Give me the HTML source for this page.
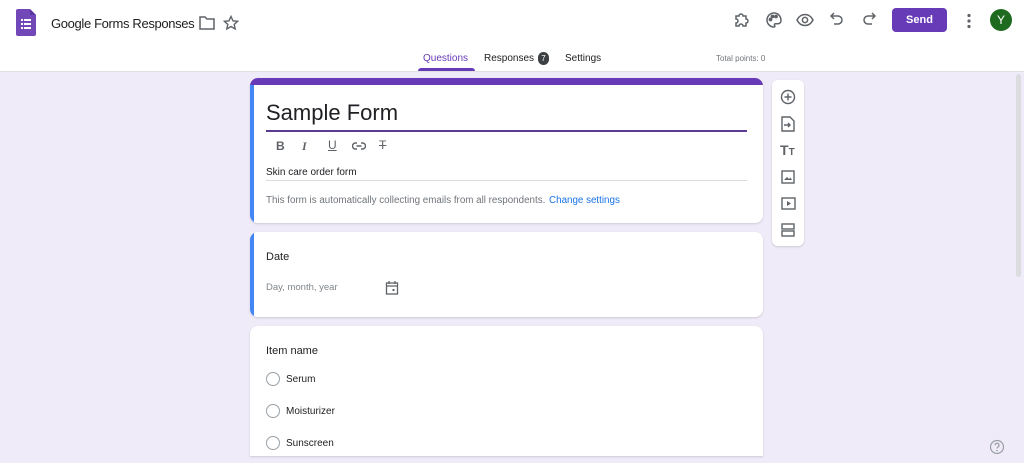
<!DOCTYPE html>
<html><head><style>
*{box-sizing:border-box;margin:0;padding:0}
body{width:1024px;height:463px;overflow:hidden;background:#f0ebf8;font-family:"Liberation Sans",Arial,sans-serif;color:#202124;position:relative}
.hdr{position:absolute;left:0;top:0;width:1024px;height:72px;background:#fff;border-bottom:1px solid #e0e0e0}
.abs{position:absolute}
.card{position:absolute;left:250px;width:513px;background:#fff;border-radius:8px;box-shadow:0 1px 2px rgba(0,0,0,.15)}
.ic{position:absolute;stroke:#5f6368;fill:none;stroke-width:1.8}
.t{position:absolute;white-space:nowrap}
.radio{position:absolute;left:16px;width:14px;height:14px;border:1.2px solid #9aa0a6;border-radius:50%}
</style></head><body>
<div class="hdr">
 <svg class="abs" style="left:16px;top:9px" width="20" height="27" viewBox="0 0 20 27"><path d="M0 2a2 2 0 0 1 2-2h12l6 6v19a2 2 0 0 1-2 2H2a2 2 0 0 1-2-2z" fill="#7248b9"/><path d="M14 0v6h6z" fill="#5b36a0"/><g fill="#fff"><rect x="5" y="10" width="2" height="2"/><rect x="8" y="10" width="7" height="2"/><rect x="5" y="14" width="2" height="2"/><rect x="8" y="14" width="7" height="2"/><rect x="5" y="18" width="2" height="2"/><rect x="8" y="18" width="7" height="2"/></g></svg>
 <div class="t" style="left:51px;top:16px;font-size:13px;color:#202124;letter-spacing:-0.35px">Google Forms Responses</div>
 <svg class="ic" style="left:199px;top:16px" width="16" height="14" viewBox="0 0 16 14"><path d="M1 1h5l2 2h7v10H1z" stroke-width="1.5"/></svg>
 <svg class="ic" style="left:223px;top:15px" width="16" height="16" viewBox="0 0 16 16"><path d="M8 1.5l2 4.3 4.6.5-3.4 3.1 1 4.5L8 11.6l-4.2 2.3 1-4.5L1.4 6.3 6 5.8z" stroke-width="1.4"/></svg>
 <svg class="ic" style="left:733px;top:11px" width="18" height="18" viewBox="0 0 18 18"><path d="M3 5h3a2 2 0 1 1 4 0h3v3a2 2 0 1 1 0 4v3h-3a2 2 0 1 0-4 0H3v-3a2 2 0 1 0 0-4z" stroke-width="1.5"/></svg>
 <svg class="ic" style="left:765px;top:11px" width="18" height="18" viewBox="0 0 18 18"><path d="M9 2a7 7 0 0 0 0 14c1 0 1.2-1 .6-1.6-.6-.7-.2-1.7.8-1.7H13a3 3 0 0 0 3-3C16 5 13 2 9 2z" stroke-width="1.5"/><circle cx="5.5" cy="8.5" r="1" fill="#5f6368"/><circle cx="7.5" cy="5.5" r="1" fill="#5f6368"/><circle cx="11" cy="5.5" r="1" fill="#5f6368"/></svg>
 <svg class="ic" style="left:796px;top:12px" width="18" height="16" viewBox="0 0 18 16"><path d="M1 8c2-4 5-5.5 8-5.5s6 1.5 8 5.5c-2 4-5 5.5-8 5.5S3 12 1 8z" stroke-width="1.5"/><circle cx="9" cy="8" r="2.6" stroke-width="1.5"/></svg>
 <svg class="ic" style="left:830px;top:12px" width="14" height="14" viewBox="0 0 14 14"><path d="M4 1L1 4l3 3M1 4h7a4 4 0 0 1 0 8H4" stroke-width="1.5"/></svg>
 <svg class="ic" style="left:862px;top:12px" width="14" height="14" viewBox="0 0 14 14"><path d="M10 1l3 3-3 3M13 4H6a4 4 0 0 0 0 8h4" stroke-width="1.5"/></svg>
 <div class="abs" style="left:892px;top:8px;width:55px;height:24px;background:#673ab7;border-radius:4px;color:#fff;font-size:11px;font-weight:bold;text-align:center;line-height:25px">Send</div>
 <svg class="abs" style="left:966px;top:13px" width="6" height="16"><circle cx="3" cy="2.5" r="1.6" fill="#5f6368"/><circle cx="3" cy="8" r="1.6" fill="#5f6368"/><circle cx="3" cy="13.5" r="1.6" fill="#5f6368"/></svg>
 <div class="abs" style="left:990px;top:9px;width:22px;height:22px;border-radius:50%;background:#1e6a1e;color:#fff;font-size:12px;text-align:center;line-height:22px">Y</div>
 <div class="t" style="left:423px;top:53px;font-size:10px;color:#673ab7">Questions</div>
 <div class="abs" style="left:418px;top:68px;width:57px;height:3px;background:#673ab7;border-radius:3px 3px 0 0"></div>
 <div class="t" style="left:484px;top:53px;font-size:10px;color:#202124">Responses</div>
 <div class="abs" style="left:538px;top:52px;width:11px;height:13px;border-radius:6px;background:#3c4043;color:#fff;font-size:8px;text-align:center;line-height:13px">7</div>
 <div class="t" style="left:565px;top:53px;font-size:10px;color:#202124">Settings</div>
 <div class="t" style="left:716px;top:54px;font-size:8px;color:#70757a">Total points: 0</div>
</div>

<div class="card" style="top:78px;height:145px;overflow:hidden">
 <div class="abs" style="left:0;top:0;width:513px;height:7px;background:#673ab7"></div>
 <div class="abs" style="left:0;top:7px;width:4px;height:138px;background:#4285f4"></div>
 <div class="t" style="left:16px;top:22px;font-size:22px">Sample Form</div>
 <div class="abs" style="left:16px;top:52px;width:481px;height:2px;background:#5e3b92"></div>
 <div class="t" style="left:26px;top:61px;font-size:12px;font-weight:bold;color:#5f6368">B</div>
 <div class="t" style="left:52px;top:61px;font-size:12px;font-style:italic;font-weight:bold;color:#5f6368;font-family:'Liberation Serif',serif">I</div>
 <div class="t" style="left:78px;top:60px;font-size:12px;text-decoration:underline;color:#5f6368">U</div>
 <svg class="ic" style="left:102px;top:64px" width="14" height="8" viewBox="0 0 14 8"><path d="M5 1H3.5a3 3 0 0 0 0 6H5M9 1h1.5a3 3 0 0 1 0 6H9M4.5 4h5" stroke-width="1.4"/></svg>
 <div class="t" style="left:129px;top:60px;font-size:12px;color:#5f6368;text-decoration:line-through">T</div>
 <div class="t" style="left:16px;top:89px;font-size:10px">Skin care order form</div>
 <div class="abs" style="left:16px;top:102px;width:481px;height:1px;background:#dadce0"></div>
 <div class="t" style="left:16px;top:117px;font-size:9.8px;color:#70757a">This form is automatically collecting emails from all respondents. <span style="color:#1a73e8;margin-left:1px">Change settings</span></div>
</div>

<div class="abs" style="left:772px;top:80px;width:32px;height:166px;background:#fff;border-radius:6px;box-shadow:0 1px 2px rgba(0,0,0,.15)">
 <svg class="ic" style="left:8px;top:9px" width="16" height="16" viewBox="0 0 16 16"><circle cx="8" cy="8" r="6.5" stroke-width="1.4"/><path d="M8 4.5v7M4.5 8h7" stroke-width="1.4"/></svg>
 <svg class="ic" style="left:9px;top:36px" width="14" height="16" viewBox="0 0 14 16"><path d="M1 1h8l4 4v10H1z M3 9h6M7 7l2 2-2 2" stroke-width="1.4"/></svg>
 <div class="t" style="left:8px;top:62px;font-size:14px;font-weight:bold;color:#5f6368">T<span style="font-size:10px">T</span></div>
 <svg class="ic" style="left:9px;top:90px" width="14" height="14" viewBox="0 0 14 14"><rect x="1" y="1" width="12" height="12" stroke-width="1.4"/><path d="M3 10l3-3 2 2 1.5-1.5L11 10z" fill="#5f6368" stroke="none"/></svg>
 <svg class="ic" style="left:9px;top:117px" width="15" height="13" viewBox="0 0 15 13"><rect x="1" y="1" width="13" height="11" stroke-width="1.4"/><path d="M6 4v5l4-2.5z" fill="#5f6368" stroke="none"/></svg>
 <svg class="ic" style="left:9px;top:143px" width="14" height="14" viewBox="0 0 14 14"><rect x="1" y="1" width="12" height="5" stroke-width="1.4"/><rect x="1" y="8" width="12" height="5" stroke-width="1.4"/></svg>
</div>

<div class="card" style="top:232px;height:85px;overflow:hidden">
 <div class="abs" style="left:0;top:0;width:4px;height:85px;background:#4285f4"></div>
 <div class="t" style="left:16px;top:19px;font-size:11px">Date</div>
 <div class="t" style="left:16px;top:50px;font-size:9.5px;color:#80868b">Day, month, year</div>
 <svg class="ic" style="left:135px;top:48px" width="14" height="15" viewBox="0 0 14 15"><rect x="1.5" y="3" width="11" height="11" stroke-width="1.3"/><path d="M1.5 6h11M4 1v3M10 1v3" stroke-width="1.3"/><rect x="7.5" y="9" width="2" height="2" fill="#5f6368" stroke="none"/></svg>
</div>

<div class="card" style="top:326px;height:130px;border-radius:8px 8px 0 0">
 <div class="t" style="left:16px;top:19px;font-size:11px">Item name</div>
 <div class="radio" style="top:46px"></div><div class="t" style="left:36px;top:48px;font-size:10px">Serum</div>
 <div class="radio" style="top:78px"></div><div class="t" style="left:36px;top:80px;font-size:10px">Moisturizer</div>
 <div class="radio" style="top:110px"></div><div class="t" style="left:36px;top:112px;font-size:10px">Sunscreen</div>
</div>

<div class="abs" style="left:1016px;top:74px;width:5px;height:203px;background:#dadce0;border-radius:3px"></div>
<svg class="ic" style="left:989px;top:439px" width="16" height="16" viewBox="0 0 16 16"><circle cx="8" cy="8" r="6.5" stroke="#9aa0a6" stroke-width="1.2"/><path d="M6 6.3a2 2 0 1 1 2.8 1.8c-.6.3-.8.7-.8 1.4" stroke="#9aa0a6" stroke-width="1.2"/><circle cx="8" cy="11.6" r=".8" fill="#9aa0a6" stroke="none"/></svg>
</body></html>
